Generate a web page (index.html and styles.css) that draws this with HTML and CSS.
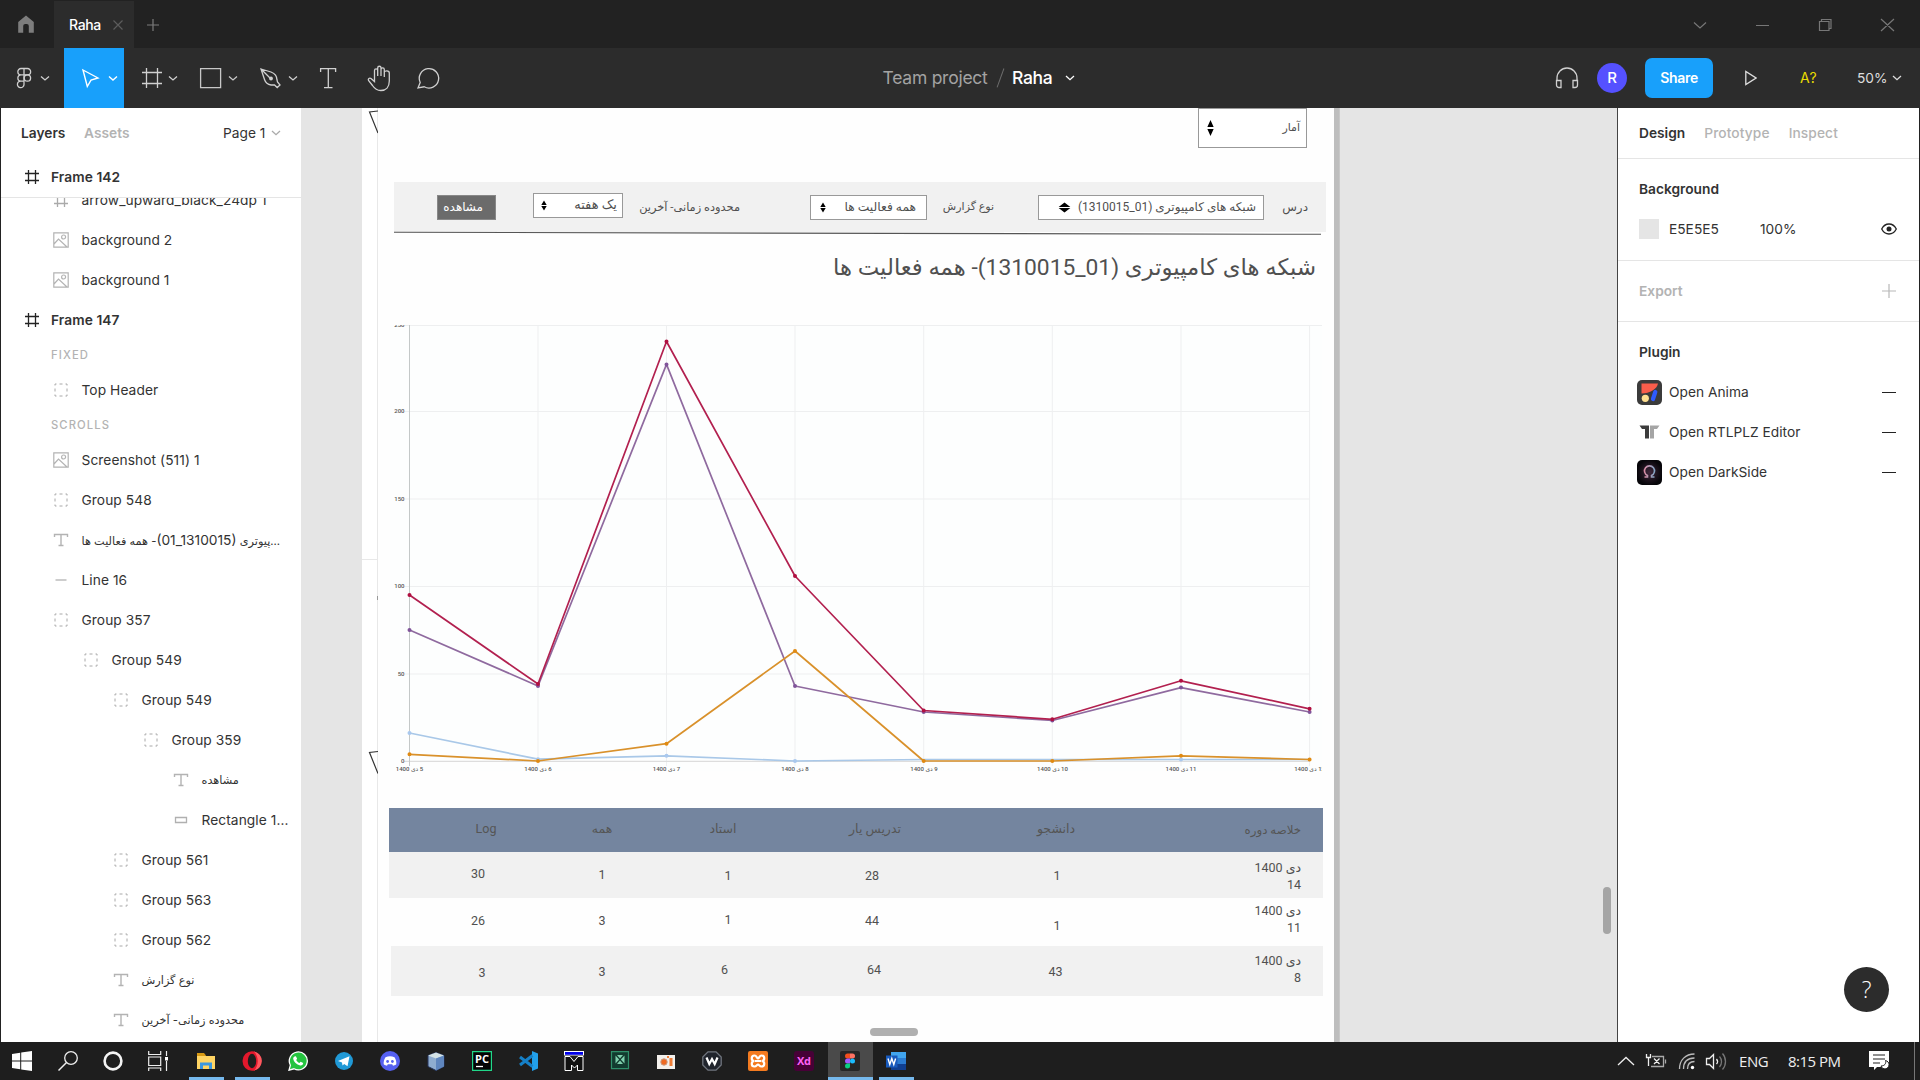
FILE: index.html
```html
<!DOCTYPE html>
<html lang="en">
<head>
<meta charset="utf-8">
<title>Raha</title>
<link rel="stylesheet" href="styles.css">
</head>
<body>
<svg class="defs" width="0" height="0">
  <symbol id="group" viewBox="0 0 16 16"><path d="M2 3.500V2h1.500M6.500 2h3M12.500 2H14v1.500M14 6.500v3M14 12.500V14h-1.500M9.500 14h-3M3.500 14H2v-1.500M2 9.500v-3" fill="none" stroke="#a8a8a8" stroke-width="1"/></symbol>
  <symbol id="image" viewBox="0 0 16 16"><path d="M.8.8h14.400v14.400H.8zM1 12l4.500-5 8.500 8" fill="none" stroke="#b3b3b3" stroke-width="1.200"/><circle cx="10.600" cy="5" r="2" fill="none" stroke="#b3b3b3" stroke-width="1.200"/></symbol>
  <symbol id="frame" viewBox="0 0 16 16"><path d="M4.500 1v14M11.500 1v14M1 4.500h14M1 11.500h14" fill="none" stroke="currentColor" stroke-width="1.300"/></symbol>
  <symbol id="text" viewBox="0 0 16 16"><path d="M1.500 5V2.500h13V5M8 2.500v11M5.500 13.500h5" fill="none" stroke="#b3b3b3" stroke-width="1.400"/></symbol>
  <symbol id="line" viewBox="0 0 16 16"><path d="M2.500 8h11" stroke="#b8b8b8" stroke-width="1.400"/></symbol>
  <symbol id="rect" viewBox="0 0 16 16"><path d="M2.500 5.500h11v5h-11z" fill="none" stroke="#b0b0b0" stroke-width="1.300"/></symbol>
  <symbol id="chev" viewBox="0 0 10 6"><path d="M1 1l4 3.700L9 1" fill="none" stroke="currentColor" stroke-width="1.300"/></symbol>
  <symbol id="sort" viewBox="0 0 10 18" preserveAspectRatio="none"><path d="M5 1l4.500 7h-9zM5 17l4.500-7h-9z" fill="#000"/></symbol>
</svg>

<header class="titlebar">
  <svg class="home" width="16" height="18" viewBox="0 0 16 18"><path d="M8 .5L15.800 7v10.700h-5V11a2 2 0 0 0-2-2H7.200a2 2 0 0 0-2 2v6.700h-5V7z" fill="#7d7d7d"/></svg>
  <div class="tab"><span>Raha</span><svg width="10" height="10" viewBox="0 0 10 10"><path d="M.5.5l9 9M9.500.5l-9 9" stroke="#5c5c5c" stroke-width="1.200"/></svg></div>
  <svg class="plus" width="12" height="12" viewBox="0 0 12 12"><path d="M6 0v12M0 6h12" stroke="#7c7c7c" stroke-width="1.200"/></svg>
  <svg class="window" width="230" height="48" viewBox="1690 0 230 48" fill="none" stroke="#777" stroke-width="1.200"><path d="M1694 22.500l6 5.500 6-5.500M1756 25.500h13M1819.500 21.500h9.500v9h-9.500zM1821.500 21.500v-2h9.500v9h-2M1881 19l13 12M1894 19l-13 12"/></svg>
</header>

<nav class="toolbar">
  <svg width="63" height="60" viewBox="1 48 63 60" fill="none" stroke="#d0d0d0" stroke-width="1.300"><path d="M24 68.500h-3a3 3 0 0 0 0 6.300h3zM24 68.500h3.500a3 3 0 0 1 0 6.300H24M24 74.800h-3a3 3 0 0 0 0 6.300h3zM24 81.100h-3a3.300 3.300 0 1 0 3 3.500z"/><circle cx="27.400" cy="78" r="3.200"/><path d="M41 76.500l4 3.500 4-3.500"/></svg>
  <svg class="on" width="60" height="60" viewBox="64 48 60 60" fill="none" stroke="#fff" stroke-width="1.400"><path d="M83 70l15 8-7 2.200-3.700 6.300z"/><path d="M109 76.500l4 3.500 4-3.500"/></svg>
  <svg width="60" height="60" viewBox="124 48 60 60" fill="none" stroke="#d0d0d0" stroke-width="1.300"><path d="M146.500 68v20M157.500 68v20M142 72.500h20M142 83.500h20M169 76.500l4 3.500 4-3.500"/></svg>
  <svg width="60" height="60" viewBox="184 48 60 60" fill="none" stroke="#c8c8c8" stroke-width="1.300"><path d="M200.600 68.600h20v19h-20zM229 76.500l4 3.500 4-3.500"/></svg>
  <svg width="60" height="60" viewBox="244 48 60 60" fill="none" stroke="#d0d0d0" stroke-width="1.300"><path d="M261 69l10 3c4 1.500 6 4 6 8l.5 2 2.500 3-2.800 2.500-2.700-2.500h-3.500c-3.500-.5-5.500-2.500-6.500-5.500zM261 69l9 9"/><circle cx="271" cy="78.500" r="1.900" fill="#d0d0d0" stroke="none"/><path d="M289 76.500l4 3.500 4-3.500"/></svg>
  <svg width="49" height="60" viewBox="304 48 49 60" fill="none" stroke="#d0d0d0" stroke-width="1.300"><path d="M320.600 72v-3.400h15V72M328.300 68.600v19M324 87.600h8.500"/></svg>
  <svg width="51" height="60" viewBox="353 48 51 60" fill="none" stroke="#d0d0d0" stroke-width="1.300"><path d="M374.500 80v-9.500c0-2.200 3.200-2.200 3.200 0V76v-8c0-2.300 3.300-2.300 3.300 0v8-6.500c0-2.200 3.300-2.200 3.300 0V77v-4.500c0-2.200 5-2.200 5 .5v8c0 6-3.300 9.500-8.500 9.500-4.500 0-6.300-2-8.300-5l-4-5c-.8-1.600 1-3 2.500-2l3.500 3z"/></svg>
  <svg width="49" height="60" viewBox="404 48 49 60" fill="none" stroke="#d0d0d0" stroke-width="1.300"><path d="M418 88l2.200-5.500a9.700 9.700 0 1 1 4 4.300z"/></svg>
  <div class="crumb"><span class="team">Team project</span><i></i><b>Raha</b><svg width="10" height="6"><use href="#chev"/></svg></div>
  <div class="right">
    <svg width="24" height="24" viewBox="0 0 24 24" fill="none" stroke="#d0d0d0" stroke-width="1.300"><path d="M2 15v-3a10 10 0 0 1 20 0v3M1.500 14.500h4.500v7H4a2.500 2.500 0 0 1-2.500-2.500zM22.500 14.500H18v7h2a2.500 2.500 0 0 0 2.500-2.500z"/></svg>
    <span class="avatar">R</span>
    <span class="share">Share</span>
    <svg class="play" width="12" height="16" viewBox="0 0 12 16"><path d="M.8 1.500v13L11 8z" fill="none" stroke="#ddd" stroke-width="1.300"/></svg>
    <span class="missing">A?</span>
    <span class="pct">50%</span>
    <svg class="pc" width="10" height="6"><use href="#chev"/></svg>
  </div>
</nav>

<main>
  <aside class="layers">
    <div class="ltabs"><b>Layers</b><b class="dim">Assets</b><span>Page 1</span><svg width="10" height="6"><use href="#chev"/></svg></div>
    <div class="row top sticky"><svg><use href="#frame"/></svg><b>Frame 142</b></div>
    <div class="clip"><div class="list">
      <div class="row l1"><svg><use href="#frame"/></svg><span>arrow_upward_black_24dp 1</span></div>
      <div class="row l1"><svg><use href="#image"/></svg><span>background 2</span></div>
      <div class="row l1"><svg><use href="#image"/></svg><span>background 1</span></div>
      <div class="row top"><svg><use href="#frame"/></svg><b>Frame 147</b></div>
      <div class="sec">FIXED</div>
      <div class="row l1"><svg><use href="#group"/></svg><span>Top Header</span></div>
      <div class="sec">SCROLLS</div>
      <div class="row l1"><svg><use href="#image"/></svg><span>Screenshot (511) 1</span></div>
      <div class="row l1"><svg><use href="#group"/></svg><span>Group 548</span></div>
      <div class="row l1"><svg><use href="#text"/></svg><span class="fa" dir="rtl">...پیوتری <bdo dir="ltr">(01_1310015)</bdo>- همه فعالیت ها</span></div>
      <div class="row l1"><svg><use href="#line"/></svg><span>Line 16</span></div>
      <div class="row l1"><svg><use href="#group"/></svg><span>Group 357</span></div>
      <div class="row l2"><svg><use href="#group"/></svg><span>Group 549</span></div>
      <div class="row l3"><svg><use href="#group"/></svg><span>Group 549</span></div>
      <div class="row l4"><svg><use href="#group"/></svg><span>Group 359</span></div>
      <div class="row l5"><svg><use href="#text"/></svg><span class="fa" dir="rtl">مشاهده</span></div>
      <div class="row l5"><svg><use href="#rect"/></svg><span>Rectangle 1...</span></div>
      <div class="row l3"><svg><use href="#group"/></svg><span>Group 561</span></div>
      <div class="row l3"><svg><use href="#group"/></svg><span>Group 563</span></div>
      <div class="row l3"><svg><use href="#group"/></svg><span>Group 562</span></div>
      <div class="row l3"><svg><use href="#text"/></svg><span class="fa" dir="rtl">نوع گزارش</span></div>
      <div class="row l3"><svg><use href="#text"/></svg><span class="fa" dir="rtl">محدوده زمانی- آخرین</span></div>
    </div></div>
  </aside>

  <section class="canvas">
    <svg class="gutter" width="16" height="934" viewBox="362 108 16 934" fill="none"><path d="M377.500 108v934M362 559.500h15" stroke="#e8e8e8"/><path d="M378 111l-8.500 1 8.500 21M378 751.500l-8.500 1 8.500 21" stroke="#333" stroke-width="1.200"/><path d="M377.500 596v4" stroke="#999"/></svg>
    <div class="page" dir="rtl">
      <div class="select stats"><span>آمار</span><svg width="7" height="18"><use href="#sort"/></svg></div>
      <div class="filters">
        <span class="f1">درس</span>
        <div class="select s1"><span>شبکه های کامپیوتری <bdo dir="ltr">(1310015_01)</bdo></span><svg width="13" height="11"><use href="#sort"/></svg></div>
        <span class="f2">نوع گزارش</span>
        <div class="select s2"><span>همه فعالیت ها</span><svg width="6" height="11"><use href="#sort"/></svg></div>
        <span class="f3">محدوده زمانی- آخرین</span>
        <div class="select s3"><span>یک هفته</span><svg width="6" height="11"><use href="#sort"/></svg></div>
        <span class="view">مشاهده</span>
      </div>
      <svg class="rule" width="928" height="4" viewBox="395 231 928 4"><path d="M395 232.300L1322 234.300" stroke="#555" stroke-width="1.100"/></svg>
      <h1>شبکه های کامپیوتری <bdo dir="ltr">(1310015_01)</bdo>- همه فعالیت ها</h1>
      <svg class="chart" width="932" height="449" viewBox="390 325 932 449" direction="ltr">
        <rect x="390" y="325" width="932" height="446" fill="#fdfefe"/>
        <path d="M404 325.500h918M404 411.500h906M404 499h906M404 586.500h906M404 674h906M538 325v441M666.500 325v441M795 325v441M923.700 325v441M1052.300 325v441M1181 325v441M1309.600 325v441" stroke="#eeeff0" fill="none"/>
        <path d="M404 761.300h906" stroke="#ddd" stroke-width="1.200"/><path d="M409.500 325v441" stroke="#c4c8c8"/>
        <g fill="none" stroke-width="1.700" stroke-linejoin="round">
          <path d="M409.500 733L538 759.200 666.500 755.800 795 761 923.700 759.500 1052.300 759.500 1181 759.500 1309.600 759.500" stroke="#a9c8e8"/>
          <path d="M409.500 630L538 686 666.500 364.400 795 686 923.700 712 1052.300 720.500 1181 687.600 1309.600 712" stroke="#8f6a9f"/>
          <path d="M409.500 595L538 684 666.500 341.500 795 576 923.700 710.500 1052.300 719.300 1181 680.800 1309.600 708.800" stroke="#b2204f"/>
          <path d="M409.500 754.300L538 761 666.500 743.700 795 651 923.700 761 1052.300 761 1181 755.800 1309.600 759.500" stroke="#d9912b"/>
        </g>
        <path fill="none" stroke="#a9c8ee" stroke-width="4" stroke-linecap="round" d="M409.500 733h0M538 759.200h0M666.500 755.800h0M795 761h0M1181 759.500h0"/>
        <path fill="none" stroke="#80549a" stroke-width="4" stroke-linecap="round" d="M409.500 630h0M538 686h0M666.500 364.400h0M795 686h0M923.700 712h0M1052.300 720.500h0M1181 687.600h0M1309.600 712h0"/>
        <path fill="none" stroke="#b00f40" stroke-width="4" stroke-linecap="round" d="M409.500 595h0M538 684h0M666.500 341.500h0M795 576h0M923.700 710.500h0M1052.300 719.300h0M1181 680.800h0M1309.600 708.800h0"/>
        <path fill="none" stroke="#e08a12" stroke-width="4" stroke-linecap="round" d="M409.500 754.300h0M538 761h0M666.500 743.700h0M795 651h0M923.700 761h0M1052.300 761h0M1181 755.800h0M1309.600 759.500h0"/>
        <g class="ticks" text-anchor="end"><text x="404.500" y="327">250</text><text x="404.500" y="413.300">200</text><text x="404.500" y="500.800">150</text><text x="404.500" y="588.200">100</text><text x="404.500" y="675.700">50</text><text x="404.500" y="763">0</text></g>
        <g class="ticks" text-anchor="middle"><text x="409.500" y="770.600">1400 &lrm;دی&lrm; 5</text><text x="538" y="770.600">1400 &lrm;دی&lrm; 6</text><text x="666.500" y="770.600">1400 &lrm;دی&lrm; 7</text><text x="795" y="770.600">1400 &lrm;دی&lrm; 8</text><text x="924" y="770.600">1400 &lrm;دی&lrm; 9</text><text x="1052.500" y="770.600">1400 &lrm;دی&lrm; 10</text><text x="1181" y="770.600">1400 &lrm;دی&lrm; 11</text><text x="1309.600" y="770.600">1400 &lrm;دی&lrm; 12</text></g>
      </svg>
      <div class="table" dir="ltr">
        <div class="tr th"><span>Log</span><span>همه</span><span>استاد</span><span>تدریس یار</span><span>دانشجو</span><span class="last">خلاصه دوره</span></div>
        <div class="tr r1"><span class="up2">30</span><span class="up1">1</span><span>1</span><span>28</span><span>1</span><span class="last down1" dir="rtl">دی 1400<br>14</span></div>
        <div class="tr r2"><span class="up2">26</span><span class="up2">3</span><span class="up3">1</span><span class="up2">44</span><span class="down3">1</span><span class="last up3" dir="rtl">دی 1400<br>11</span></div>
        <div class="tr r3"><span class="down1">3</span><span>3</span><span class="up2">6</span><span class="up2">64</span><span>43</span><span class="last up2" dir="rtl">دی 1400<br>8</span></div>
      </div>
    </div>
    <i class="edge"></i>
    <i class="vscroll"></i><i class="hscroll"></i>
  </section>

  <aside class="props">
    <div class="ptabs"><b>Design</b><b class="dim">Prototype</b><b class="dim">Inspect</b></div>
    <div class="bg"><b>Background</b>
      <div class="fill"><i></i><span class="hex">E5E5E5</span><span>100%</span><svg width="16" height="12" viewBox="0 0 16 12"><path d="M.7 6C2.500 2.500 5 1 8 1s5.500 1.500 7.300 5C13.500 9.500 11 11 8 11S2.500 9.500.7 6z" fill="none" stroke="#222" stroke-width="1.300"/><circle cx="8" cy="6" r="2.500" fill="#222"/></svg></div>
    </div>
    <div class="export"><b>Export</b><svg width="14" height="14" viewBox="0 0 14 14"><path d="M7 0v14M0 7h14" stroke="#b8b8b8" stroke-width="1.200"/></svg></div>
    <div class="plugins"><b>Plugin</b>
      <div class="plug"><svg width="25" height="25" viewBox="0 0 25 25"><rect width="25" height="25" rx="5" fill="#3b3b3b"/><path d="M4.500 3.500H21C20 9 13 13.500 4.500 13.500z" fill="#f95d4b"/><circle cx="8.300" cy="18.300" r="3.600" fill="#ffdf90"/><path d="M18.300 12l-2.300 7" stroke="#2f5bff" stroke-width="4.200" stroke-linecap="round"/></svg><span>Open Anima</span><i></i></div>
      <div class="plug"><svg width="25" height="25" viewBox="0 0 25 25"><path d="M2.500 5.500H12V18.500H8V9H5z" fill="#3c3c3c"/><path d="M13 5.500h9.500L20 9h-3v9.500h-4z" fill="#a5a5a5"/></svg><span>Open RTLPLZ Editor</span><i></i></div>
      <div class="plug"><svg width="25" height="25" viewBox="0 0 25 25"><defs><linearGradient id="om"><stop offset="0" stop-color="#d98ca4"/><stop offset="1" stop-color="#84a5c4"/></linearGradient><radialGradient id="gl"><stop offset="0" stop-color="#40283c"/><stop offset="1" stop-color="#07060a"/></radialGradient></defs><rect width="25" height="25" rx="5" fill="url(#gl)"/><path d="M7.500 17h3v-1.500a5 5 0 1 1 4 0V17h3" fill="none" stroke="url(#om)" stroke-width="1.600"/></svg><span>Open DarkSide</span><i></i></div>
    </div>
    <span class="help">?</span>
  </aside>
</main>

<footer class="taskbar">
  <div class="slot sys"><svg viewBox="0 0 20 20"><path d="M0 3l8.200-1.200v7.700H0zM9.200 1.600L20 0v9.500H9.200zM0 10.500h8.200v7.700L0 17zM9.200 10.500H20V20L9.200 18.400z" fill="#fff"/></svg></div>
  <div class="slot sys"><svg viewBox="0 0 20 20"><circle cx="13" cy="7" r="6.300" fill="none" stroke="#eee" stroke-width="1.300"/><path d="M8.500 11.500L.5 19.500" stroke="#eee" stroke-width="1.500"/></svg></div>
  <div class="slot sys"><svg viewBox="0 0 20 20"><circle cx="10" cy="10" r="8.400" fill="none" stroke="#f4f4f4" stroke-width="2.600"/></svg></div>
  <div class="slot sys"><svg viewBox="0 0 20 20"><path d="M.7 0v3.500h12V0M.7 6h12v8.500H.7zM.7 20v-3h12v3M18.500 0v5M18.500 10v10" fill="none" stroke="#eee" stroke-width="1.200"/><path d="M17 6h3v3.500h-3z" fill="#fff"/></svg></div>
  <div class="slot run gap"><svg viewBox="0 0 20 20"><path d="M1 2h7l2 2.500v4H1z" fill="#d89a14"/><path d="M1 5h18v13H1z" fill="#ffd463"/><path d="M4 18v-6.500h12V18h-3v-3.500H7V18z" fill="#3b97e0"/></svg></div>
  <div class="slot run"><svg viewBox="0 0 20 20"><ellipse cx="10" cy="10" rx="9.500" ry="9.800" fill="#e3182c"/><path d="M12 .4a9.800 9.800 0 0 1 0 19.200c5-5 5-14 0-19.200z" fill="#ff5a60"/><ellipse cx="10" cy="10" rx="4.200" ry="7.200" fill="#1e1e1e"/></svg></div>
  <div class="slot"><svg viewBox="0 0 20 20"><path d="M1 19.200l1.400-5A9 9 0 1 1 6 17.800z" fill="#25c33f" stroke="#fff" stroke-width="1.300"/><path d="M6.500 5.500l1.400-.3 1.200 2.600-.9 1.200c.8 1.500 1.700 2.300 3.200 3l1.200-1.200 2.600 1.300c-.2 2-1.600 2.600-3 2.400-3.500-.6-6.500-3.700-7-6.700 0-1 .4-1.800 1.300-2.300z" fill="#fff"/></svg></div>
  <div class="slot"><svg viewBox="0 0 20 20"><circle cx="10" cy="10" r="9" fill="#2099d6"/><path d="M4 10l11.500-4.700-2 10-3.300-2.400-1.700 1.700-.5-3z" fill="#fff"/></svg></div>
  <div class="slot"><svg viewBox="0 0 20 20"><circle cx="10" cy="10" r="10" fill="#5560f0"/><path d="M5.500 6.300c3-1.300 6-1.300 9 0 1.500 2.400 2 4.800 1.800 7-1.300 1-2.300 1.300-3.300 1.400l-.8-1.400H7.800L7 14.700c-1-.1-2-.4-3.300-1.400-.2-2.200.3-4.600 1.800-7z" fill="#fff"/><circle cx="7.600" cy="10.500" r="1.400" fill="#5560f0"/><circle cx="12.400" cy="10.500" r="1.400" fill="#5560f0"/></svg></div>
  <div class="slot"><svg viewBox="0 0 20 20"><path d="M2 4.500l8-3 8 3v11l-8 4-8-4z" fill="#8fadd0" stroke="#26355c"/><path d="M2 4.500l8-3 8 3-8 3z" fill="#d4e3e6"/><path d="M10 7.500l8-3v11l-8 4z" fill="#5f86be"/></svg></div>
  <div class="slot"><svg viewBox="0 0 20 20"><path d="M.6.6h18.800v18.800H.6z" fill="#050505" stroke="#21d789" stroke-width="1.200"/><text x="3" y="11.500" font-size="10.500" font-weight="700" fill="#fff" font-family="Open Sans,sans-serif" textLength="14" lengthAdjust="spacingAndGlyphs">PC</text><path d="M4 15.500h7" stroke="#fff" stroke-width="1.300"/></svg></div>
  <div class="slot"><svg viewBox="0 0 20 20"><path d="M14 0l6 2.600v14.800L14 20V0z" fill="#22a0ea"/><path d="M14.500 4.500L2 14M2 6l12.500 9.500" stroke="#1580c8" stroke-width="3"/></svg></div>
  <div class="slot"><svg viewBox="0 0 20 20"><path d="M0 0h20v4.500H0z" fill="#fff"/><path d="M1 1h18v2.800H1z" fill="#0000e8"/><path d="M1 5.500h5l4 5 4-5h5v14h-5.500V14l-3 3-3-3v5.500H1z" fill="#111" stroke="#fff"/></svg></div>
  <div class="slot"><svg viewBox="0 0 20 20"><path d="M1.500.6h17v17h-17z" fill="#123b2f" stroke="#2f8f6a" stroke-width="1.200"/><path d="M5.500 4.500l3.700 4-3.700 4zM14.500 4.500l-3.700 4 3.700 4zM7 4h6l-3 3.500zM7 13h6l-3-3.500z" fill="#7ed0ad"/></svg></div>
  <div class="slot"><svg viewBox="0 0 20 20"><path d="M1 4h18v14H1z" fill="#f4f1ed"/><circle cx="8" cy="11" r="3.200" fill="#f06a22" stroke="#c99b82"/><path d="M13.500 7h3v8h-3zM11 5h2v2h-2z" fill="#ef7d36"/></svg></div>
  <div class="slot"><svg viewBox="0 0 20 20"><path d="M6 .8h8L19.200 6v8L14 19.200H6L.8 14V6z" fill="#20242c" stroke="#70757e" stroke-width="1.300"/><path d="M4.500 6.500l2.800 6.500 2.700-5 2.700 5 2.800-6.500" fill="none" stroke="#fff" stroke-width="2.200"/></svg></div>
  <div class="slot"><svg viewBox="0 0 20 20"><rect width="20" height="20" rx="2" fill="#f47b20"/><path d="M6.500 4.500a2.700 2.700 0 0 0 0 5.500 2.700 2.700 0 0 0 0 5.500c2 0 2.500-2 3.500-2s1.500 2 3.500 2a2.700 2.700 0 0 0 0-5.500 2.700 2.700 0 0 0 0-5.500c-2 0-2.500 3-3.500 3s-1.500-3-3.500-3zM7 10h6" fill="none" stroke="#fff" stroke-width="2.200"/></svg></div>
  <div class="slot"><svg viewBox="0 0 20 20"><rect width="20" height="20" rx="3" fill="#470137"/><text x="3" y="14" font-size="11" font-weight="700" fill="#ff61f6" font-family="Open Sans,sans-serif" textLength="14">Xd</text></svg></div>
  <div class="slot run active"><svg viewBox="0 0 20 20"><rect width="20" height="20" rx="2" fill="#262626"/><path d="M10 2.500v5H7.500a2.500 2.500 0 0 1 0-5z" fill="#f24e1e"/><path d="M10 2.500h2.500a2.500 2.500 0 0 1 0 5H10z" fill="#ff7262"/><path d="M10 7.500v5H7.500a2.500 2.500 0 0 1 0-5z" fill="#a259ff"/><circle cx="12.500" cy="10" r="2.500" fill="#1abcfe"/><path d="M10 12.500V15a2.500 2.500 0 1 1-2.500-2.500z" fill="#0acf83"/></svg></div>
  <div class="slot run"><svg viewBox="0 0 20 20"><path d="M5 1h15v6H5z" fill="#41a5ee"/><path d="M5 7h15v6H5z" fill="#2b7cd3"/><path d="M5 13h15v6H5z" fill="#103f91"/><path d="M0 4.500h11.500v12H0z" fill="#185abd"/><path d="M2 7.500l1.800 6 2-6 2 6 1.800-6" fill="none" stroke="#fff" stroke-width="1.400"/></svg></div>
  <div class="tray">
    <svg width="120" height="38" viewBox="1610 1042 120 38" fill="none" stroke="#eee" stroke-width="1.300"><path d="M1618 1065l8-7.500 8 7.500"/><path d="M1652 1056.500h11.500v10H1651" stroke="#aaa"/><path d="M1665.500 1059.500v4" stroke="#aaa"/><path d="M1654 1058.500l5.500 5.500M1659.500 1058.500l-5.500 5.500M1646.500 1054v3.500h4V1054M1648.500 1058v8"/><g stroke="#bbb"><path d="M1679.500 1069c0-9 6-15 15-15M1683.500 1069c0-7 4-11 11-11M1687.500 1069c0-4.500 2.500-7.500 7-7.500"/></g><circle cx="1692.500" cy="1067.500" r="1.700" fill="#fff" stroke="none"/><path d="M1706.500 1058.500h3l4-4v14l-4-4h-3zM1716.500 1059c1.300 1.500 1.300 3.500 0 5"/><path d="M1719.500 1056.500c2.700 3 2.700 7.500 0 10.500M1722.500 1053.500c4 4.500 4 11.500 0 16" stroke="#777"/></svg>
    <span class="eng">ENG</span><span class="clock">8:15 PM</span>
    <svg class="note" width="22" height="22" viewBox="0 0 22 22"><path d="M0 1h20v16H8l-3 3v-3H0z" fill="#fff"/><path d="M4 5h12M4 9h12M4 13h7" stroke="#222" stroke-width="1.200"/><path d="M16.500 10.500c1 3-1 5.500-4.500 5.500 1.500 4.500 8 3.500 8-1.500 0-2-1.500-3.500-3.500-4z" fill="#fff" stroke="#1e1e1e"/></svg>
    <i class="peek"></i>
  </div>
</footer>
</body>
</html>
```
FILE: styles.css
```css
* { box-sizing: border-box; }
body { margin: 0; width: 1920px; height: 1080px; overflow: hidden; display: flex; flex-direction: column; background: #222; color: #333; font: 13.75px/20px Inter, sans-serif; }
svg { display: block; flex: none; }
b { font-weight: 600; }
i { flex: none; }
.defs { position: absolute; }
.dim { color: #b3b3b3; }

.titlebar { height: 48px; flex: none; display: flex; align-items: center; background: #222; }
.home { margin-left: 18px; }
.tab { width: 80px; height: 47px; margin: 1px 13px 0 20px; padding: 0 0 0 15px; display: flex; align-items: center; gap: 12px; background: #2c2c2c; color: #fff; font-weight: 500; font-size: 14px; letter-spacing: -.35px; }
.tab span { width: 32px; }
.window { margin-left: auto; }
.plus { margin-top: 1px; }

.toolbar { height: 60px; flex: none; display: flex; align-items: center; padding-left: 1px; background: #2c2c2c; color: #ddd; }
.on { background: #18a0fb; }
.crumb { margin-left: 429.5px; display: flex; align-items: center; font-size: 17.5px; letter-spacing: -.25px; }
.team { color: #a3a3a3; width: 106px; white-space: nowrap; }
.crumb i { width: 1.4px; height: 20px; margin: 0 11px 0 11px; background: #6c6c6c; transform: rotate(20deg); }
.crumb b { color: #fff; font-weight: 500; width: 42px; }
.crumb svg { margin-left: 11px; color: #fff; }
.right { margin-left: auto; display: flex; align-items: center; width: 365px; }
.avatar { width: 30px; height: 30px; margin: 0 18px 0 18px; border-radius: 50%; background: #5551ff; color: #fff; text-align: center; line-height: 30px; font-size: 15px; font-weight: 500; }
.share { width: 68px; height: 40px; border-radius: 7px; background: #18a0fb; color: #fff; text-align: center; line-height: 40px; font-weight: 600; font-size: 14px; letter-spacing: -.3px; }
.play { margin-left: 32px; }
.missing { width: 57px; margin-left: 43px; color: #e9dc00; font-size: 14px; letter-spacing: .7px; }
.pct { width: 35px; }

main { height: 934px; flex: none; display: grid; grid-template-columns: 301px 1316px 303px; }
.layers { border-left: 1px solid #222; background: #fff; overflow: hidden; }
.ltabs { height: 49px; display: flex; align-items: center; padding: 1px 0 0 20px; }
.ltabs b { width: 63px; }
.ltabs b + b { width: 139px; }
.ltabs span { width: 48px; }
.ltabs svg { color: #aaa; }
.row { height: 40px; display: flex; align-items: center; gap: 12.5px; white-space: nowrap; letter-spacing: .07px; }
.row svg { width: 16px; height: 16px; color: #aaa; }
.top { padding-left: 23px; gap: 11px; }
.top svg { color: #222; }
.sticky { border-bottom: 1px solid #e5e5e5; height: 41px; }
.l1 { padding-left: 52px; }
.l2 { padding-left: 82px; }
.l3 { padding-left: 112px; }
.l4 { padding-left: 142px; }
.l5 { padding-left: 172px; }
.sec { height: 30px; padding-left: 50px; line-height: 31px; font-size: 11.25px; font-weight: 500; letter-spacing: 1.1px; color: #b3b3b3; }
.clip { height: 844px; overflow: hidden; }
.list { margin-top: -18px; }
.row .fa { font-family: Inter, "DejaVu Sans", sans-serif; font-size: 11.3px; letter-spacing: 0; }
.fa bdo { font-size: 13.75px; }

.canvas { position: relative; display: flex; padding-left: 61px; background: #e5e5e5; overflow: hidden; }
.gutter { background: #fff; }
.page { width: 956px; background: #fefefe; font-family: Roboto, "DejaVu Sans", sans-serif; color: #505050; font-size: 12px; }
.page span, h1 { white-space: nowrap; }
.edge { width: 6px; background: #bebebe; border-right: 1px solid #c8c8c8; }
.select { display: flex; align-items: center; border: 1px solid #999; background: #fff; }
.select svg { margin-right: auto; }
.stats { width: 109px; height: 40px; margin-right: 27px; padding: 0 6px 1px 8px; font-size: 11px; }
.filters { margin: 34px 8px 0 16px; height: 50px; display: flex; align-items: center; padding-right: 18px; background: #f1f1f1; }
.f1 { width: 44px; }
.s1 { width: 226px; height: 25px; padding: 0 7px 0 19px; }
.f2 { width: 67px; margin-right: 44px; font-size: 11px; }
.s2 { width: 117px; height: 25px; padding: 0 10px 0 9px; font-size: 12.3px; }
.f3 { width: 117px; margin-right: 70px; font-size: 11.4px; }
.s3 { width: 90px; height: 25px; margin-top: -4px; padding: 0 5px 0 7px; font-size: 13px; }
.view { width: 59px; height: 25px; margin-right: 37px; padding-right: 12px; line-height: 23px; background: #6b6b6b; border: 1px solid #888; color: #fff; }
.rule { margin: -1px 12px 0 0; }
h1 { margin: 16px 18px 0 0; height: 36px; line-height: 34px; font-size: 22.8px; font-weight: 400; }
.chart { margin: 38px 12px 0 0; }
.ticks { font: 500 6px Roboto, "DejaVu Sans", sans-serif; fill: #555; }
.table { margin: 34px 11px 0 0; font-size: 12.5px; line-height: 17px; width: 934px; }
.tr { display: grid; align-items: center; text-align: center; background: #f1f1f1; }
.tr > span { justify-self: center; }
.tr > .last { justify-self: end; text-align: right; }
.th { height: 44px; background: #74859f; color: #555; grid-template-columns: 194px 38px 204px 100px 262px 114px; }
.th > span { margin-bottom: 3px; }
.th > .last { margin-bottom: 0; font-size: 11.8px; }
.r1, .r2 { height: 46px; grid-template-columns: 178px 70px 182px 106px 264px 112px; }
.r2 { height: 48px; background: #fefefe; }
.r3 { height: 50px; margin-left: 2px; grid-template-columns: 182px 58px 187px 112px 251px 120px; }
.up1 { margin-bottom: 2px; }
.up2 { margin-bottom: 4px; }
.up3 { margin-bottom: 6px; }
.down1 { margin-top: 2px; }
.down3 { margin-top: 6px; }
.vscroll, .hscroll { position: absolute; border-radius: 4px; background: #a5a5a5; }
.vscroll { left: 1302px; top: 779px; width: 8px; height: 47px; }
.hscroll { left: 569px; top: 920px; width: 48px; height: 8px; background: #b0b0b0; }

.props { position: relative; border-left: 1px solid #444; border-right: 1px solid #222; background: #fff; }
.ptabs { height: 51px; display: flex; align-items: center; gap: 19px; padding-left: 21px; border-bottom: 1px solid #e5e5e5; }
.ptabs .dim { font-weight: 500; letter-spacing: .1px; }
.bg { height: 102px; padding: 20px 22px 0 21px; border-bottom: 1px solid #e5e5e5; }
.fill { display: flex; align-items: center; height: 20px; margin-top: 20px; }
.fill i { width: 20px; height: 20px; background: #e5e5e5; margin-right: 10px; }
.hex { width: 91px; }
.fill svg { margin-left: auto; }
.export { height: 61px; display: flex; align-items: center; justify-content: space-between; padding: 0 23px 0 21px; border-bottom: 1px solid #e5e5e5; color: #b3b3b3; }
.plugins { padding: 20px 23px 0 19px; }
.plugins > b { display: block; padding-left: 2px; height: 30px; }
.plug { height: 40px; display: flex; align-items: center; gap: 7px; }
.plug i { margin-left: auto; width: 14px; height: 1px; background: #222; }
.help { position: absolute; left: 226px; top: 859px; width: 45px; height: 45px; border-radius: 50%; background: #2c2c2c; color: #fff; text-align: center; font: 300 23px/45px "Open Sans", sans-serif; }

.taskbar { height: 38px; flex: none; display: flex; background: #1e1e1e; }
.slot { width: 46px; height: 38px; display: flex; align-items: center; justify-content: center; }
.slot svg { width: 20px; height: 20px; }
.sys { width: 45px; }
.sys:first-child { padding-right: 1px; }
.gap { margin-left: 3px; }
.run { background: linear-gradient(#76b9ed, #76b9ed) center bottom / 35px 3px no-repeat; }
.active { background: linear-gradient(#76b9ed, #76b9ed) center bottom / 45px 3px no-repeat, linear-gradient(90deg, #4a4a4a, #4a4a4a) center / 45px 38px no-repeat; }
.tray { margin-left: auto; width: 310px; display: flex; align-items: center; color: #eee; font: 15px/20px "Open Sans", sans-serif; }
.eng { width: 49px; margin-left: 9px; letter-spacing: -.4px; }
.clock { width: 81px; letter-spacing: -.5px; white-space: nowrap; }
.peek { width: 1px; height: 38px; margin-left: 23px; background: #777; }
```
